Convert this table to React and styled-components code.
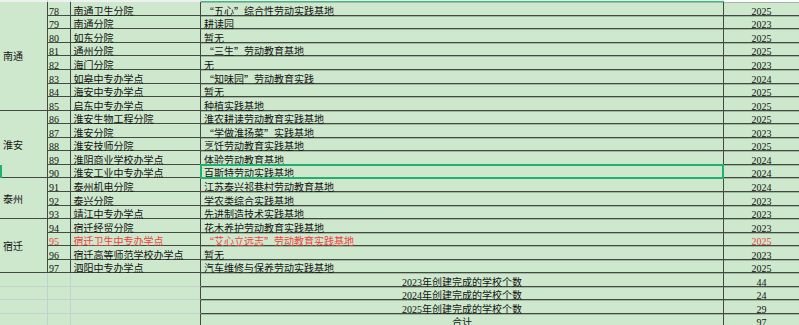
import React from 'react';
import styled, { createGlobalStyle, css } from 'styled-components';

const GlobalStyle = createGlobalStyle`
  html, body { margin: 0; padding: 0; background: #ffffff; overflow: hidden; }
  body { font-family: "Liberation Serif", "Noto Sans CJK SC", serif; }
`;

const ROW = 13.55;
const GREEN = '#cee8cd';
const LINE = '#424a42';
const FAINT = '#bfd3cf';
const SEL = '#22b071';

const Sheet = styled.div`
  display: grid;
  grid-template-columns: 48px 23px 130px 523px 75px;
  grid-template-rows: 2.3px repeat(24, ${ROW}px);
  width: 799px;
  background: ${GREEN};
  font-size: 10px;
  color: #121412;
`;

const place = css`
  grid-row: ${(p) => p.$row} / span ${(p) => p.$span || 1};
  grid-column: ${(p) => p.$col};
`;

const HeadCell = styled.div`
  ${place};
  box-sizing: border-box;
  background: ${(p) => (p.$tone === 'white' ? '#ffffff' : p.$tone === 'sel' ? '#e4efe9' : '#eff1f0')};
  border-right: ${(p) => (p.$tone === 'gray' ? `1px solid #d3d8d5` : 'none')};
  border-bottom: ${(p) => (p.$tone === 'sel' ? `1px solid #3fb987` : 'none')};
`;

const Cell = styled.div`
  ${place};
  box-sizing: border-box;
  display: flex;
  align-items: flex-end;
  justify-content: ${(p) => (p.$center ? 'center' : 'flex-start')};
  padding-left: ${(p) => (p.$center ? 0 : p.$pad || 0)}px;
  line-height: 7px;
  white-space: nowrap;
  color: ${(p) => (p.$red ? '#f0403d' : 'inherit')};
  border-right: ${(p) => (p.$last ? 'none' : `1px solid ${LINE}`)};
  border-bottom: 1px solid ${LINE};
  box-shadow: ${(p) => (p.$wide ? 'inset 0 1px 0 rgba(80, 96, 80, 0.35)' : 'none')};
`;

const RegionCell = styled.div`
  ${place};
  box-sizing: border-box;
  display: flex;
  align-items: center;
  padding-left: 3px;
  font-family: "Noto Sans CJK SC", sans-serif;
  border-right: 1px solid ${LINE};
  border-bottom: 1px solid ${LINE};
`;

const BlankCell = styled.div`
  ${place};
  box-sizing: border-box;
  border-right: 1px solid ${(p) => (p.$edge ? LINE : FAINT)};
  border-bottom: 1px solid ${FAINT};
`;

const SelectionBox = styled.div`
  ${place};
  margin: -1px 0 -1px -1px;
  border: 2px solid ${SEL};
  z-index: 2;
  pointer-events: none;
`;

const RowMark = styled.div`
  ${place};
  width: 2px;
  background: ${SEL};
  z-index: 2;
`;

const Quote = styled.span`
  font-family: "Noto Sans CJK SC", sans-serif;
  font-feature-settings: "fwid" 1;
`;

const withQuotes = (s) =>
  s.split(/([“”])/).map((part, i) =>
    part === '“' || part === '”' ? <Quote key={i}>{part}</Quote> : <React.Fragment key={i}>{part}</React.Fragment>
  );

const groups = [
  {
    name: '南通',
    rows: [
      [78, '南通卫生分院', '“五心”综合性劳动实践基地', 2025],
      [79, '南通分院', '耕读园', 2023],
      [80, '如东分院', '暂无', 2025],
      [81, '通州分院', '“三生”劳动教育基地', 2025],
      [82, '海门分院', '无', 2023],
      [83, '如皋中专办学点', '“知味园”劳动教育实践', 2024],
      [84, '海安中专办学点', '暂无', 2025],
      [85, '启东中专办学点', '种植实践基地', 2025],
    ],
  },
  {
    name: '淮安',
    rows: [
      [86, '淮安生物工程分院', '淮农耕读劳动教育实践基地', 2025],
      [87, '淮安分院', '“学做淮扬菜”实践基地', 2023],
      [88, '淮安技师分院', '烹饪劳动教育实践基地', 2025],
      [89, '淮阴商业学校办学点', '体验劳动教育基地', 2024],
      [90, '淮安工业中专办学点', '百斯特劳动实践基地', 2024],
    ],
  },
  {
    name: '泰州',
    rows: [
      [91, '泰州机电分院', '江苏泰兴祁巷村劳动教育基地', 2024],
      [92, '泰兴分院', '学农类综合实践基地', 2023],
      [93, '靖江中专办学点', '先进制造技术实践基地', 2023],
    ],
  },
  {
    name: '宿迁',
    rows: [
      [94, '宿迁经贸分院', '花木养护劳动教育实践基地', 2023],
      [95, '宿迁卫生中专办学点', '“艾心立远志”劳动教育实践基地', 2025, true],
      [96, '宿迁高等师范学校办学点', '暂无', 2023],
      [97, '泗阳中专办学点', '汽车维修与保养劳动实践基地', 2025],
    ],
  },
];

const totals = [
  ['2023年创建完成的学校个数', 44],
  ['2024年创建完成的学校个数', 24],
  ['2025年创建完成的学校个数', 29],
  ['合计', 97],
];

const SELECTED = 90;

export default function App() {
  const cells = [];
  let r = 2;
  let selRow = 0;
  groups.forEach((g) => {
    cells.push(
      <RegionCell key={`g-${g.name}`} $row={r} $span={g.rows.length} $col={1}>
        {g.name}
      </RegionCell>
    );
    g.rows.forEach(([no, school, base, year, red]) => {
      if (no === SELECTED) selRow = r;
      cells.push(
        <Cell key={`n${no}`} $row={r} $col={2} $pad={1} $red={red}>{no}</Cell>,
        <Cell key={`s${no}`} $row={r} $col={3} $pad={2.5} $red={red}>{school}</Cell>,
        <Cell key={`b${no}`} $row={r} $col={4} $pad={3} $red={red} $wide>{withQuotes(base)}</Cell>,
        <Cell key={`y${no}`} $row={r} $col={5} $center $last $wide $red={red}>{year}</Cell>
      );
      r += 1;
    });
  });
  totals.forEach(([label, value]) => {
    cells.push(
      <BlankCell key={`t1${label}`} $row={r} $col={1} />,
      <BlankCell key={`t2${label}`} $row={r} $col={2} />,
      <BlankCell key={`t3${label}`} $row={r} $col={3} $edge />,
      <Cell key={`t4${label}`} $row={r} $col={4} $center $wide>{label}</Cell>,
      <Cell key={`t5${label}`} $row={r} $col={5} $center $last $wide>{value}</Cell>
    );
    r += 1;
  });

  return (
    <>
      <GlobalStyle />
      <Sheet lang="zh-CN">
        <HeadCell $row={1} $col={1} $tone="gray" />
        <HeadCell $row={1} $col={2} $tone="gray" />
        <HeadCell $row={1} $col={3} $tone="gray" />
        <HeadCell $row={1} $col={4} $tone="sel" />
        <HeadCell $row={1} $col={5} $tone="white" />
        {cells}
        <SelectionBox $row={selRow} $col={4} />
        <RowMark $row={selRow} $col={1} />
      </Sheet>
    </>
  );
}
